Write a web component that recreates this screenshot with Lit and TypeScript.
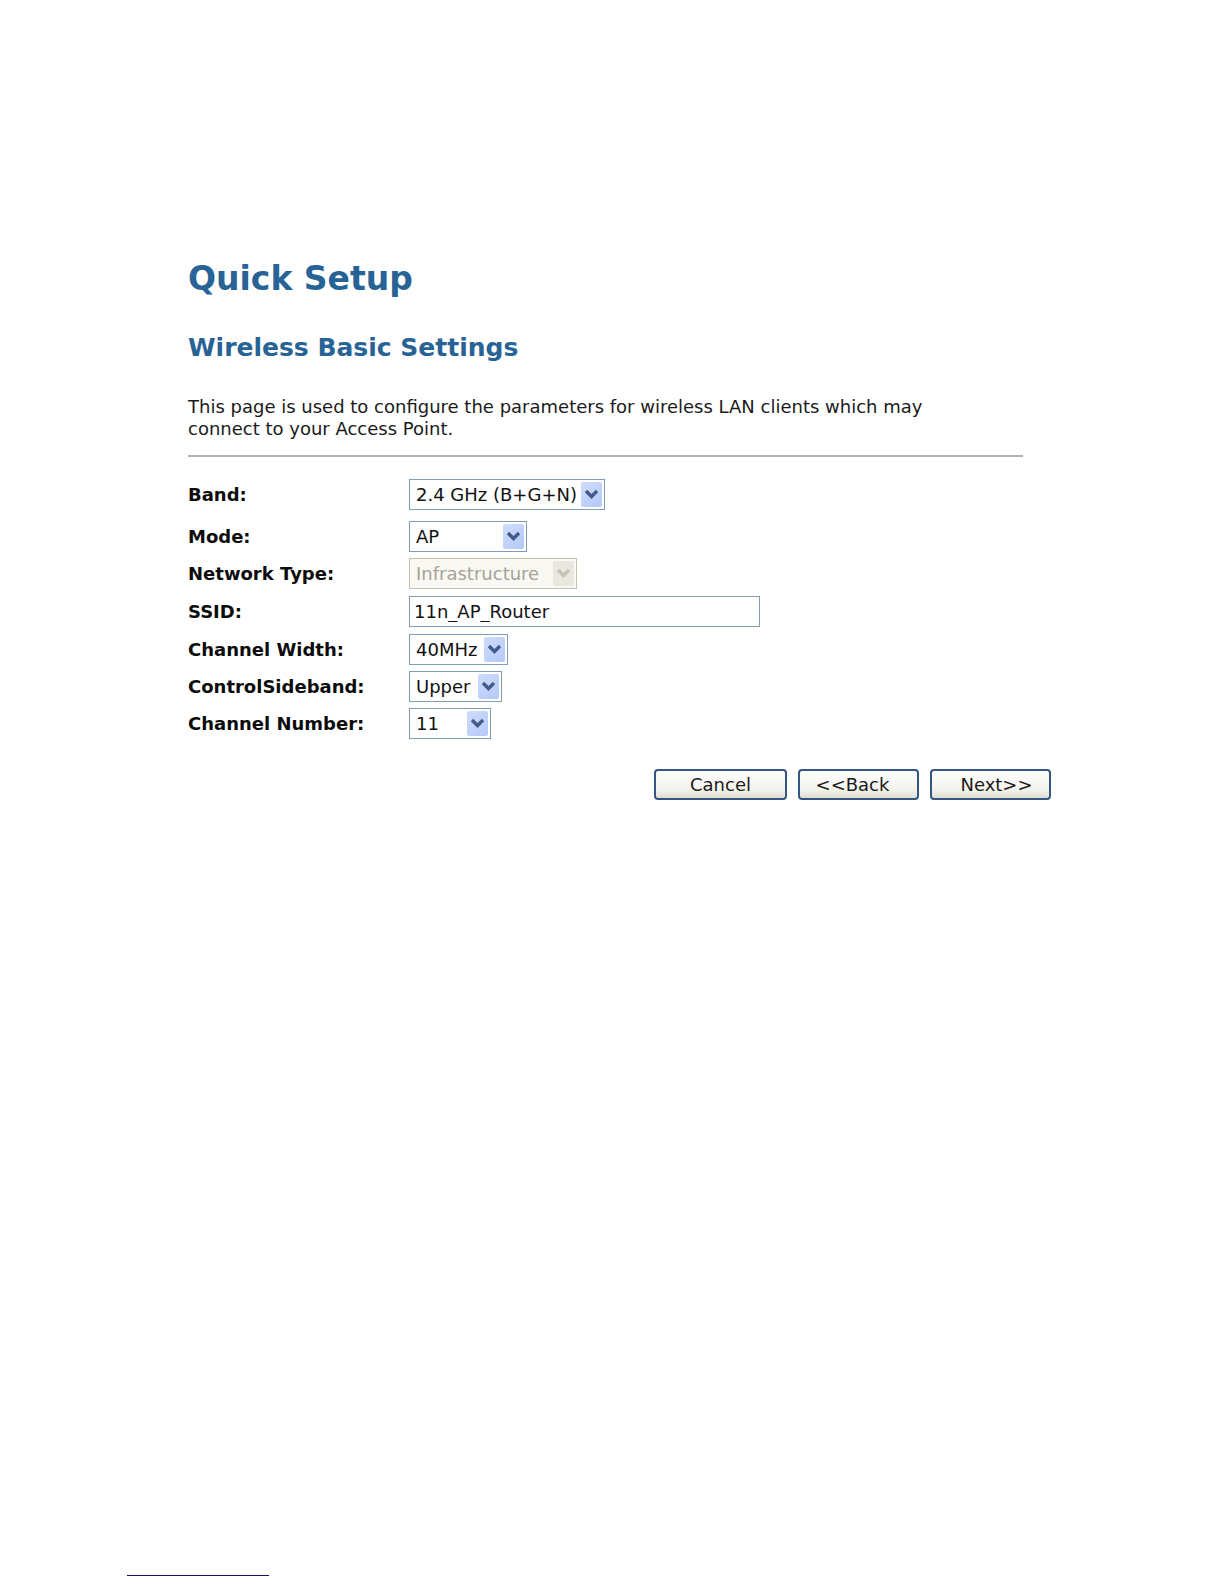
import { LitElement, html, css } from "lit";
import { customElement, property } from "lit/decorators.js";

@customElement("xp-select")
class XpSelect extends LitElement {
  @property() label = "";
  @property() size = "";
  @property({ type: Boolean }) disabled = false;
  @property({ attribute: false }) options: string[] = [];

  static styles = css`
    :host { display: block; }
    .row { display: grid; grid-template-columns: 221px minmax(0, 1fr); align-items: center; }
    .label { font-weight: bold; font-size: 18px; line-height: 31px; color: #0c0c0c; }
    .box { display: inline-grid; grid-template-columns: minmax(0, 1fr) 21px; align-items: center; box-sizing: border-box; height: 31px; border: 1px solid #7f9db9; background: #fff; padding: 2px; justify-self: start; max-width: 100%; }
    .band { width: 196px; }
    .mode { width: 118px; }
    .network { width: 168px; }
    .width { width: 99px; }
    .sideband { width: 93px; }
    .channel { width: 82px; }
    select { grid-column: 1 / -1; grid-row: 1; appearance: none; width: 100%; height: 25px; border: 0; margin: 0; padding: 0 22px 0 4px; background: transparent; font: inherit; font-size: 18px; line-height: 25px; color: #111; outline-offset: 1px; }
    .arrow { grid-column: 2; grid-row: 1; width: 21px; height: 25px; border-radius: 2px; background: linear-gradient(135deg, #cfdcfd, #b4c8f8); pointer-events: none; z-index: 1; }
    .arrow svg { display: block; }
    .off { border-color: #c5c2b2; background: #f9f8f2; }
    .off select { color: #a5a398; opacity: 1; }
    .off .arrow { background: #e9e8df; }
  `;

  render() {
    return html`
      <div class="row">
        <label class="label" for="field">${this.label}</label>
        <div class="box ${this.size} ${this.disabled ? "off" : ""}">
          <select id="field" ?disabled=${this.disabled}>
            ${this.options.map((o) => html`<option>${o}</option>`)}
          </select>
          <span class="arrow" aria-hidden="true">
            <svg width="21" height="25" viewBox="0 0 21 25" fill="none">
              <path d="M5 9 L10.5 14.5 L16 9" stroke=${this.disabled ? "#c5c3b8" : "#435b8b"} stroke-width="3.4" />
            </svg>
          </span>
        </div>
      </div>
    `;
  }
}

@customElement("app-root")
class AppRoot extends LitElement {
  static styles = css`
    :host { display: block; font-family: Verdana, "DejaVu Sans", sans-serif; color: #1a1a1a; background: #fff; }
    .page { box-sizing: border-box; min-height: 100vh; display: flex; flex-direction: column; padding: 258px 173px 8px 127px; }
    main { padding-left: 61px; }
    .content { margin-right: 28px; }
    h1, h2 { margin: 0; color: #286396; font-weight: bold; }
    h1 { font-size: 33px; line-height: 42px; }
    h2 { font-size: 25px; line-height: 32px; margin-top: 32px; }
    p { margin: 32px 0 0; max-width: 770px; font-size: 18px; line-height: 22px; }
    hr { border: 0; border-top: 2px solid #b5b4ab; margin: 15px 0 22px; }
    .fields { display: flex; flex-direction: column; gap: 6px; }
    .first { margin-bottom: 5px; }
    .row { display: grid; grid-template-columns: 221px minmax(0, 1fr); align-items: center; height: 33px; }
    .label { font-weight: bold; font-size: 18px; color: #0c0c0c; }
    input { box-sizing: border-box; width: 351px; max-width: 100%; height: 31px; border: 1px solid #7f9db9; border-radius: 0; background: #fff; padding: 0 4px; font: inherit; font-size: 18px; color: #111; }
    .actions { display: flex; justify-content: flex-end; gap: 11px; margin-top: 30px; }
    button { box-sizing: border-box; width: 121px; height: 31px; border: 2px solid #335780; border-radius: 4px; background: linear-gradient(#fff, #f3f2ec 70%, #e0ddd2); font: inherit; font-size: 18px; line-height: 25px; padding: 0; color: #1a1a1a; }
    .cancel { width: 133px; }
    .back { padding-right: 12px; }
    .next { padding-left: 12px; }
    footer { margin-top: auto; }
    .rule { width: 142px; border-top: 1px solid #14146e; }
  `;

  render() {
    return html`
      <div class="page">
        <main>
          <div class="content">
            <h1>Quick Setup</h1>
            <h2>Wireless Basic Settings</h2>
            <p>This page is used to configure the parameters for wireless LAN clients which may connect to your Access Point.</p>
            <hr />
            <div class="fields">
              <xp-select class="first" label="Band:" size="band" .options=${["2.4 GHz (B+G+N)"]}></xp-select>
              <xp-select label="Mode:" size="mode" .options=${["AP"]}></xp-select>
              <xp-select label="Network Type:" size="network" disabled .options=${["Infrastructure"]}></xp-select>
              <div class="row">
                <label class="label" for="ssid">SSID:</label>
                <input id="ssid" type="text" value="11n_AP_Router" />
              </div>
              <xp-select label="Channel Width:" size="width" .options=${["40MHz"]}></xp-select>
              <xp-select label="ControlSideband:" size="sideband" .options=${["Upper"]}></xp-select>
              <xp-select label="Channel Number:" size="channel" .options=${["11"]}></xp-select>
            </div>
          </div>
          <div class="actions">
            <button class="cancel" type="button">Cancel</button>
            <button class="back" type="button">&lt;&lt;Back</button>
            <button class="next" type="button">Next&gt;&gt;</button>
          </div>
        </main>
        <footer><div class="rule"></div></footer>
      </div>
    `;
  }
}
